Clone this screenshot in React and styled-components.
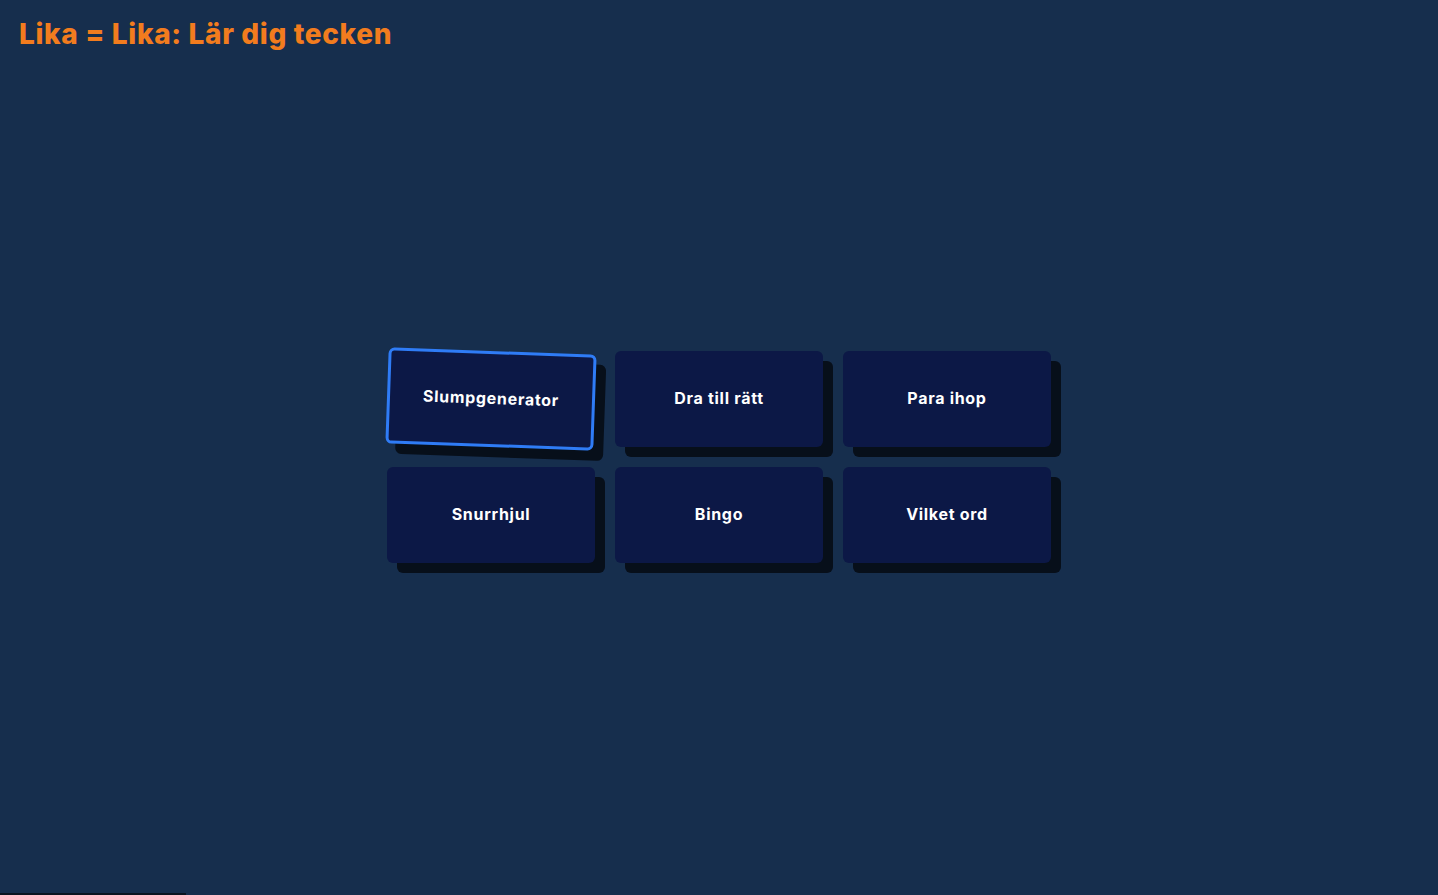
import React from 'react'
import styled, { createGlobalStyle } from 'styled-components'

const GlobalStyle = createGlobalStyle`
  html, body {
    margin: 0;
    padding: 0;
    background: #162e4d;
    font-family: Inter, "Noto Sans", sans-serif;
  }
`

const games = ['Slumpgenerator', 'Dra till rätt', 'Para ihop', 'Snurrhjul', 'Bingo', 'Vilket ord']

export default function App() {
  return (
    <Page>
      <GlobalStyle />
      <Title>Lika = Lika: Lär dig tecken</Title>
      <Stage>
        <Grid>
          {games.map((name, i) => (
            <Card key={name} active={i === 0}>
              <Label>{name}</Label>
            </Card>
          ))}
        </Grid>
      </Stage>
      <BottomLine />
    </Page>
  )
}

const Page = styled.div`
  height: 100vh;
  display: flex;
  flex-direction: column;
  background: #162e4d;
  position: relative;
  overflow: hidden;
`

const Title = styled.h1`
  margin: 0;
  padding: 15px 19px 0;
  font-size: 28px;
  font-weight: 800;
  letter-spacing: 0.65px;
  color: #f27c1e;
  line-height: 38px;
`

const Stage = styled.div`
  flex: 1;
  display: flex;
  justify-content: center;
  align-items: flex-start;
  padding-top: 298px;
`

const Grid = styled.div`
  display: grid;
  grid-template-columns: repeat(3, 208px);
  grid-auto-rows: 96px;
  gap: 20px;
`

const Card = styled.button`
  box-sizing: border-box;
  border: ${p => (p.active ? '3px solid #2f7cf6' : 'none')};
  border-radius: 6px;
  background: #0c1846;
  box-shadow: 10px 10px 0 #070f1a;
  color: #fff;
  display: flex;
  align-items: center;
  justify-content: center;
  cursor: pointer;
  padding: 0 0 3px;
  transform: ${p => (p.active ? 'rotate(2deg)' : 'none')};
`

const Label = styled.span`
  font-family: Inter, "Noto Sans", sans-serif;
  font-size: 16px;
  font-weight: 700;
  letter-spacing: 0.7px;
`

const BottomLine = styled.div`
  position: absolute;
  left: 0;
  bottom: 0;
  width: 186px;
  height: 2px;
  background: #0a1420;
`
